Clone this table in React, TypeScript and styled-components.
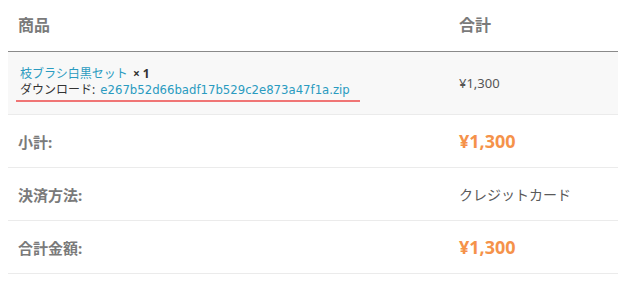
import React from "react";
import styled, { createGlobalStyle } from "styled-components";

const Global = createGlobalStyle`
  html, body { margin: 0; padding: 0; background: #fff; }
  body { font-family: "Noto Sans", "Noto Sans CJK JP", sans-serif; }
`;

const Wrap = styled.div`
  padding: 0 7px 0 8px;
`;

const Table = styled.table`
  width: 610px;
  border-collapse: collapse;
  table-layout: fixed;
`;

const HeadCell = styled.th`
  height: 48px;
  padding: 0 10px 3px;
  text-align: left;
  font-size: 16px;
  font-weight: 700;
  color: #7a7a7a;
  border-bottom: 1px solid #8a8a8a;
  vertical-align: middle;
`;

const ItemRow = styled.tr`
  background: #f8f8f8;
  border-bottom: 1px solid #ebebeb;
`;

const ItemCell = styled.td`
  height: 63px;
  box-sizing: border-box;
  padding: 14px 12px 0;
  vertical-align: top;
  font-size: 12px;
  line-height: 16px;
  color: #333;
`;

const Underlined = styled.span`
  display: inline-block;
  margin-left: -4px;
  padding: 0 10px 2px 4px;
  border-bottom: 2px solid #f07575;
`;

const Link = styled.a`
  color: #2a9bc0;
  text-decoration: none;
`;

const FileLink = styled(Link)`
  font-family: "DejaVu Sans", "Noto Sans", sans-serif;
  font-size: 11.7px;
  margin-left: 2px;
`;

const Qty = styled.strong`
  font-weight: 700;
  color: #333;
  margin-left: 2px;
`;

const Label = styled.span`
  color: #333;
`;

const PriceCell = styled.td`
  padding: 0 10px;
  vertical-align: middle;
  font-size: 13px;
  color: #555;
`;

const FootRow = styled.tr`
  border-bottom: 1px solid #ebebeb;
`;

const FootLabel = styled.th`
  height: 53px;
  box-sizing: border-box;
  padding: 0 10px;
  text-align: left;
  font-size: 15px;
  font-weight: 700;
  color: #7a7a7a;
  vertical-align: middle;
`;

const FootValue = styled.td<{ $accent?: boolean }>`
  padding: 0 10px;
  vertical-align: middle;
  font-size: ${(p) => (p.$accent ? "18px" : "14px")};
  font-weight: ${(p) => (p.$accent ? 700 : 400)};
  color: ${(p) => (p.$accent ? "#f5924a" : "#5a5a5a")};
`;

export default function App() {
  return (
    <>
      <Global />
      <Wrap>
        <Table>
          <colgroup>
            <col style={{ width: 441 }} />
            <col />
          </colgroup>
          <thead>
            <tr>
              <HeadCell>商品</HeadCell>
              <HeadCell>合計</HeadCell>
            </tr>
          </thead>
          <tbody>
            <ItemRow>
              <ItemCell>
                <Underlined>
                  <Link href="#">枝ブラシ白黒セット</Link> <Qty>× 1</Qty>
                  <br />
                  <Label>ダウンロード: </Label>
                  <FileLink href="#">e267b52d66badf17b529c2e873a47f1a.zip</FileLink>
                </Underlined>
              </ItemCell>
              <PriceCell>¥1,300</PriceCell>
            </ItemRow>
          </tbody>
          <tfoot>
            <FootRow>
              <FootLabel>小計:</FootLabel>
              <FootValue $accent>¥1,300</FootValue>
            </FootRow>
            <FootRow>
              <FootLabel>決済方法:</FootLabel>
              <FootValue>クレジットカード</FootValue>
            </FootRow>
            <FootRow>
              <FootLabel>合計金額:</FootLabel>
              <FootValue $accent>¥1,300</FootValue>
            </FootRow>
          </tfoot>
        </Table>
      </Wrap>
    </>
  );
}
